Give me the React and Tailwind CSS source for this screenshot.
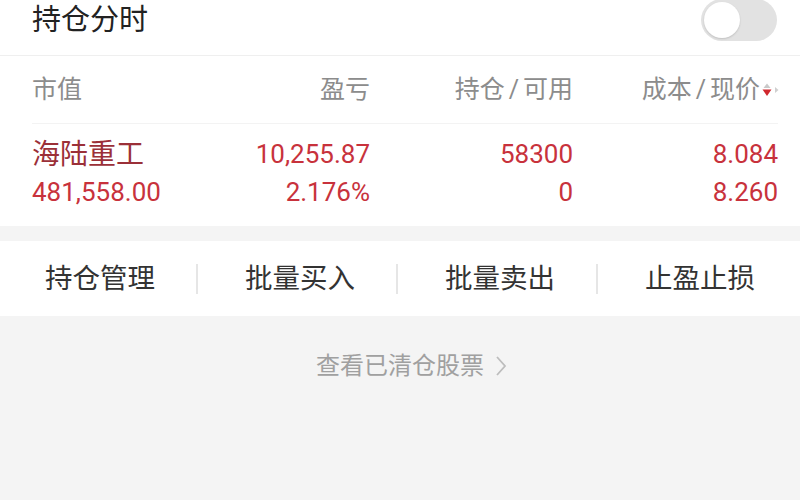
import React from 'react';

const font = { fontFamily: '"Roboto", "Noto Sans CJK SC", sans-serif' };

const SortIcon = () => (
    <svg width="18" height="18" viewBox="0 0 18 18" className="ml-[2px] mr-[-2px]">
        <path d="M1.5 7 L5 2.5 L8.5 7 Z" fill="#c9c9c9" />
        <path d="M0.5 8.5 L9.5 8.5 L5 15 Z" fill="#d0282e" />
        <path d="M13 6 L16.5 9 L13 12 Z" fill="#cfcfcf" />
    </svg>
);

const Slash = () => <span className="mx-[4px]">/</span>;

const Row = ({ cells, className = '' }) => (
    <div className={`grid grid-cols-[135px_203px_203px_1fr] ${className}`}>
        {cells.map((c, i) => (
            <div key={i} className={i === 0 ? 'text-left whitespace-nowrap' : 'text-right whitespace-nowrap'}>{c}</div>
        ))}
    </div>
);

export default function App() {
    const actions = ['持仓管理', '批量买入', '批量卖出', '止盈止损'];

    return (
        <div className="w-[800px] h-[500px] overflow-hidden bg-[#f4f4f4]" style={font}>
            {/* header */}
            <div className="bg-white">
                <div className="flex items-center justify-between pl-[32px] pr-[23px] h-[40px]">
                    <span className="text-[29px] text-[#222] leading-none">持仓分时</span>
                    <div className="w-[76px] h-[42px] rounded-full bg-[#e2e2e2] p-[3px] flex items-center">
                        <div className="w-[36px] h-[36px] rounded-full bg-white shadow-[0_1px_2px_rgba(0,0,0,0.15)]"></div>
                    </div>
                </div>
                <div className="h-[16px] border-b border-[#efefef]"></div>
            </div>

            {/* positions */}
            <div className="bg-white pl-[32px] pr-[22px]">
                <Row
                    className="h-[68px] items-center text-[25px] text-[#8c8c8c] border-b border-[#f3f3f3]"
                    cells={[
                        '市值',
                        '盈亏',
                        <span>持仓<Slash />可用</span>,
                        <span className="inline-flex items-center">成本<Slash />现价<SortIcon /></span>,
                    ]}
                />
                <div className="pt-[12px] pb-[15px] text-[26px] text-[#c8323c] leading-[37px]">
                    <Row cells={[<span className="text-[#9b3038] text-[28px]">海陆重工</span>, '10,255.87', '58300', '8.084']} />
                    <Row cells={['481,558.00', '2.176%', '0', '8.260']} />
                </div>
            </div>

            {/* actions */}
            <div className="mt-[15px] bg-white h-[75px] grid grid-cols-4 items-center">
                {actions.map((a, i) => (
                    <div key={a} className="relative flex items-center justify-center h-full text-[27.5px] text-[#333]">
                        {a}
                        {i < 3 && <div className="absolute right-[2px] top-[23px] w-[2px] h-[30px] bg-[#e6e6e6]"></div>}
                    </div>
                ))}
            </div>

            <div className="flex items-center justify-center pt-[32px] pl-[24px] text-[24px] text-[#a0a0a0]">
                <span>查看已清仓股票</span>
                <svg width="14" height="24" viewBox="0 0 14 24" className="ml-[10px]">
                    <path d="M3 3 L11 12 L3 21" fill="none" stroke="#bdbdbd" strokeWidth="1.8" />
                </svg>
            </div>
        </div>
    );
}
